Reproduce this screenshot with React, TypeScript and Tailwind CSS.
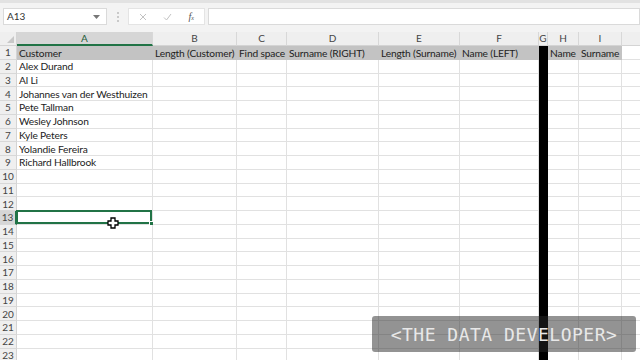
import React from 'react';

const COLS = [
  { id: 'A', w: 136 },
  { id: 'B', w: 84 },
  { id: 'C', w: 50 },
  { id: 'D', w: 92 },
  { id: 'E', w: 81 },
  { id: 'F', w: 79 },
  { id: 'G', w: 9 },
  { id: 'H', w: 31 },
  { id: 'I', w: 43 },
  { id: 'J', w: 90 },
];

const HEADERS = ['Customer', 'Length (Customer)', 'Find space', 'Surname (RIGHT)', 'Length (Surname)', 'Name (LEFT)', '', 'Name', 'Surname'];

const NAMES = [
  'Alex Durand',
  'Al Li',
  'Johannes van der Westhuizen',
  'Pete Tallman',
  'Wesley Johnson',
  'Kyle Peters',
  'Yolandie Fereira',
  'Richard Hallbrook',
];

const ROW_COUNT = 24;
const SELECTED_ROW = 13;

const font = { fontFamily: 'Lato, "Liberation Sans", sans-serif' };

function FormulaBar() {
  return (
    <div className="h-[32px] bg-[#f3f3f3] border-t-[3px] border-[#e2e2e2] flex items-start pt-[5px] pl-[3px]">
      <div className="w-[104px] h-[17px] bg-white border border-[#dadada] flex items-center justify-between px-[3px] text-[10px] text-[#333]">
        <span>A13</span>
        <svg width="7" height="4" viewBox="0 0 7 4" className="mr-[3px]">
          <path d="M0 0 L7 0 L3.5 4 Z" fill="#777" />
        </svg>
      </div>
      <div className="w-[21px] h-[17px] flex flex-col items-center justify-center gap-[2px]">
        <span className="w-[2px] h-[2px] bg-[#bbb] rounded-full" />
        <span className="w-[2px] h-[2px] bg-[#bbb] rounded-full" />
        <span className="w-[2px] h-[2px] bg-[#bbb] rounded-full" />
      </div>
      <div className="w-[77px] h-[17px] bg-white border border-[#e4e4e4] flex items-center justify-around px-[2px]">
        <svg width="8" height="8" viewBox="0 0 8 8">
          <path d="M1 1 L7 7 M7 1 L1 7" stroke="#c2c2c2" strokeWidth="1" />
        </svg>
        <svg width="9" height="8" viewBox="0 0 9 8">
          <path d="M1 4.5 L3.5 7 L8 1" stroke="#c2c2c2" strokeWidth="1" fill="none" />
        </svg>
        <span className="text-[10px] italic text-[#555]" style={{ fontFamily: '"Liberation Serif", serif' }}>
          f<span className="text-[6px]">x</span>
        </span>
      </div>
      <div className="ml-[3px] flex-1 h-[17px] bg-white border border-[#dadada]" />
    </div>
  );
}

function ColumnHeaders() {
  return (
    <div className="flex h-[14px] bg-[#efefef] text-[10px] text-[#444]">
      <div className="w-[17px] shrink-0 border-r border-b border-[#d4d4d4] flex items-end justify-end p-[2px]">
        <svg width="7" height="7" viewBox="0 0 7 7">
          <path d="M7 0 L7 7 L0 7 Z" fill="#c8c8c8" />
        </svg>
      </div>
      {COLS.map((c) => (
        <div
          key={c.id}
          style={{ width: c.w }}
          className={
            'shrink-0 flex items-center justify-center border-r border-[#d8d8d8] ' +
            (c.id === 'A' ? 'bg-[#d6d6d6] border-b-2 border-b-[#217346] text-[#1e5c38]' : 'border-b border-b-[#d4d4d4]')
          }
        >
          {c.id === 'J' ? '' : c.id}
        </div>
      ))}
    </div>
  );
}

function Row({ n }: { n: number }) {
  const selected = n === SELECTED_ROW;
  return (
    <div className="flex h-[13.75px] shrink-0 text-[10.2px] tracking-[-0.15px] leading-none">
      <div
        className={
          'w-[17px] shrink-0 flex items-center justify-center border-b border-[#d8d8d8] text-[10px] tracking-normal text-[#444] ' +
          (selected ? 'bg-[#d6d6d6] border-r-2 border-r-[#217346] text-[#1e5c38]' : 'bg-[#efefef] border-r border-r-[#d4d4d4]')
        }
      >
        {n}
      </div>
      {COLS.map((c, i) => {
        let text = '';
        if (n === 1) text = HEADERS[i] ?? '';
        else if (i === 0 && n <= 9) text = NAMES[n - 2];
        const isHeaderCell = n === 1 && i < 9;
        const isBlack = c.id === 'G';
        const isSel = selected && c.id === 'A';
        return (
          <div
            key={c.id}
            style={{ width: c.w }}
            className={
              'shrink-0 relative flex items-center pl-[2px] whitespace-nowrap overflow-visible text-[#222] ' +
              (isBlack
                ? 'bg-black'
                : isHeaderCell
                ? 'bg-[#c3c3c3] border-r border-r-[#c3c3c3]'
                : 'border-r border-b border-[#e1e1e1]')
            }
          >
            {text}
            {isSel && (
              <div className="absolute -left-[1px] -top-[1px] right-0 bottom-0 border-2 border-[#217346]">
                <div className="absolute -right-[4px] -bottom-[4px] w-[5px] h-[5px] bg-[#217346] border border-white" />
              </div>
            )}
          </div>
        );
      })}
    </div>
  );
}

export default function App() {
  return (
    <div className="w-[640px] h-[360px] overflow-hidden bg-white relative select-none" style={font}>
      <FormulaBar />
      <ColumnHeaders />
      <div className="flex flex-col">
        {Array.from({ length: ROW_COUNT }, (_, i) => (
          <Row key={i} n={i + 1} />
        ))}
      </div>

      {/* cell cursor */}
      <svg className="absolute left-[107px] top-[217px]" width="12" height="12" viewBox="0 0 12 12">
        <path
          d="M4 1 H8 V4 H11 V8 H8 V11 H4 V8 H1 V4 H4 Z"
          fill="white"
          stroke="black"
          strokeWidth="1.3"
        />
      </svg>

      {/* watermark */}
      <div className="absolute left-[372px] top-[316px] w-[264px] h-[36px] rounded-[3px] bg-[rgba(40,40,40,0.5)] flex items-center justify-center">
        <span
          className="text-[18px] text-[#e8e8e8] tracking-[0.5px]"
          style={{ fontFamily: '"DejaVu Sans Mono", "Liberation Mono", monospace', fontWeight: 300 }}
        >
          {'<THE DATA DEVELOPER>'}
        </span>
      </div>
    </div>
  );
}
